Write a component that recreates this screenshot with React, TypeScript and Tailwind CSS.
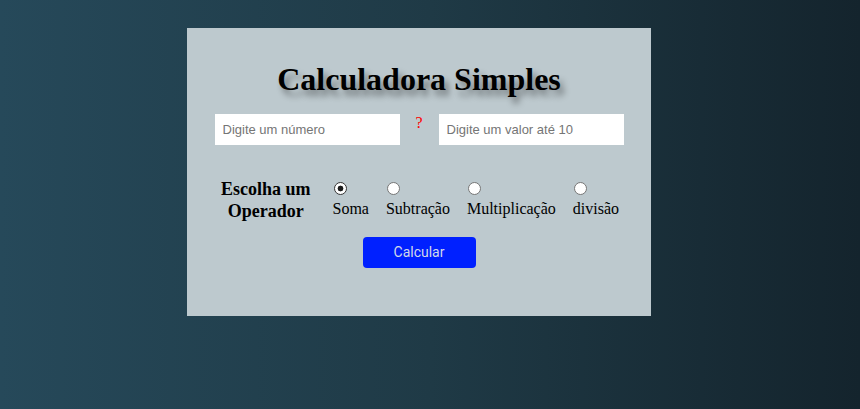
import React, { useState } from 'react';

const operators = ['Soma', 'Subtração', 'Multiplicação', 'divisão'];

export default function App() {
  const [op, setOp] = useState('Soma');

  return (
    <div className="min-h-[409px] w-full bg-gradient-to-r from-[#26495a] via-[#1f3a46] to-[#14242d] pt-[28px] pl-[187px]">
      <div className="flex h-[288px] w-[464px] flex-col items-center bg-[#bdc9ce] pt-[34px]">
        {/* title */}
        <h1
          className="text-[32px] font-bold leading-[35px] text-black [text-shadow:4px_6px_6px_rgba(0,0,0,0.4)]"
          style={{ fontFamily: '"Liberation Serif", "Times New Roman", serif' }}
        >
          Calculadora Simples
        </h1>

        {/* number inputs */}
        <div className="mt-[17px] flex items-start">
          <input
            type="text"
            placeholder="Digite um número"
            className="h-[31px] w-[185px] bg-white px-[8px] text-[13px] text-black outline-none placeholder:text-[#757575]"
            style={{ fontFamily: '"Liberation Sans", Arial, sans-serif' }}
          />
          <span
            className="w-[39px] text-center text-[16px] leading-[18px] text-[#ff0000]"
            style={{ fontFamily: '"Liberation Serif", "Times New Roman", serif' }}
          >
            ?
          </span>
          <input
            type="text"
            placeholder="Digite um valor até 10"
            className="h-[31px] w-[185px] bg-white px-[8px] text-[13px] text-black outline-none placeholder:text-[#757575]"
            style={{ fontFamily: '"Liberation Sans", Arial, sans-serif' }}
          />
        </div>

        {/* operator choice */}
        <div
          className="mt-[33px] flex items-center pl-[2px]"
          style={{ fontFamily: '"Liberation Serif", "Times New Roman", serif' }}
        >
          <p className="mr-[22px] text-center text-[18px] font-bold leading-[22px] text-black">
            Escolha um
            <br />
            Operador
          </p>
          <div className="flex gap-[17px]">
            {operators.map((name) => (
              <label key={name} className="flex cursor-pointer flex-col items-start">
                <input
                  type="radio"
                  name="operador"
                  checked={op === name}
                  onChange={() => setOp(name)}
                  className="m-0 mb-[5px] ml-[1px] h-[13px] w-[13px] cursor-pointer appearance-none rounded-full border border-[#767676] bg-white checked:border-[#333] checked:bg-[radial-gradient(circle,#1a1a1a_2.6px,#fff_3.2px)]"
                />
                <span className="text-[16px] leading-[18px] text-black">{name}</span>
              </label>
            ))}
          </div>
        </div>

        <button
          className="mt-[15px] h-[31px] w-[113px] rounded-[4px] bg-[#0020ff] text-[14px] text-[#d3d9ea]"
          style={{ fontFamily: 'Roboto, "Liberation Sans", Arial, sans-serif' }}
        >
          Calcular
        </button>
      </div>
    </div>
  );
}
